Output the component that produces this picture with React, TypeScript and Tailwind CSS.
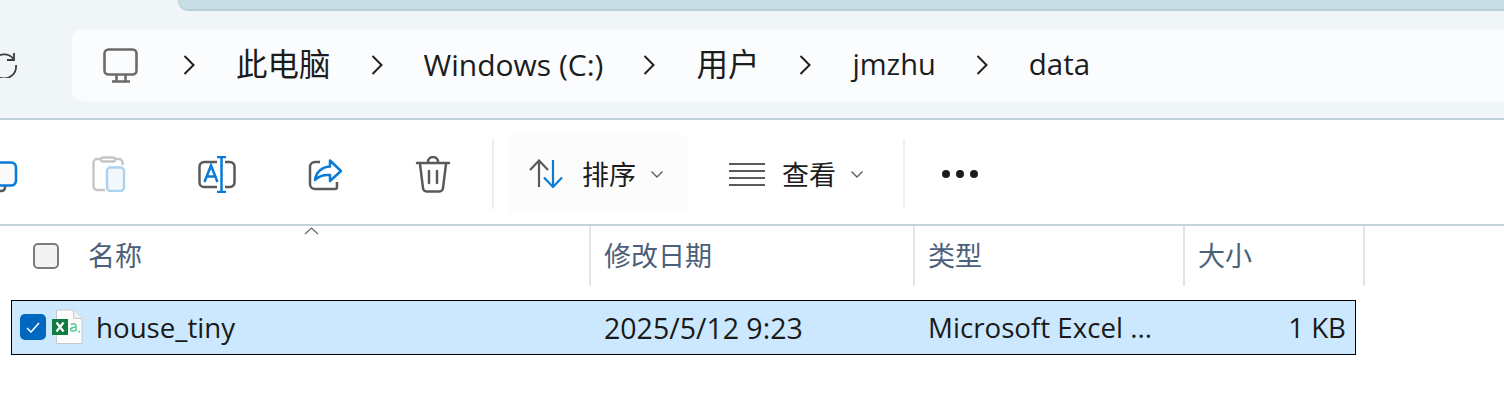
const crumbs = [
  { label: "此电脑", size: "text-[31.500px]" },
  { label: "Windows (C:)", size: "text-[30px]" },
  { label: "用户", size: "text-[31.500px]" },
  { label: "jmzhu", size: "text-[29px]" },
  { label: "data", size: "text-[29.500px]" },
];
const font = "font-['Open_Sans','Noto_Sans_CJK_SC',sans-serif]";

function Chevron() {
  return (
    <svg className="shrink-0" width="12" height="20" viewBox="0 0 12 20" fill="none" stroke="#1f1f1f" strokeWidth="2">
      <path d="M1.500 1 10.500 10 1.500 19" />
    </svg>
  );
}

function SmallDown() {
  return (
    <svg width="14" height="9" viewBox="0 0 14 9" fill="none" stroke="#5d5d5d" strokeWidth="1.400">
      <path d="M1.500 1.500 7 7l5.500-5.500" />
    </svg>
  );
}

function CopyIcon() {
  return (
    <svg width="40" height="32" viewBox="0 0 40 32" fill="none" strokeWidth="2.600">
      <path d="M24 25v1.500a3.500 3.500 0 0 1-3.500 3.500H18" stroke="#5a5a5a" />
      <rect x="1" y="1.500" width="34" height="23" rx="5" fill="#fafafa" stroke="#0a7ad6" />
    </svg>
  );
}

function PasteIcon() {
  return (
    <svg width="34" height="36" viewBox="0 0 34 36" fill="none" strokeWidth="2.400">
      <path d="M13 34H5a3.500 3.500 0 0 1-3.500-3.500V6.500A3.500 3.500 0 0 1 5 3h4M23 3h4a3.500 3.500 0 0 1 3.500 3.500V9" stroke="#c6c6c6" />
      <rect x="9" y="1.500" width="14" height="4" rx="2" stroke="#c6c6c6" />
      <rect x="15" y="11.500" width="17" height="23.500" rx="3.500" fill="#f3f8fc" stroke="#a9d2f1" />
    </svg>
  );
}

function RenameIcon() {
  return (
    <svg width="38" height="37" viewBox="0 0 38 37" fill="none" strokeWidth="2.500">
      <path d="M19 6H6a4.500 4.500 0 0 0-4.500 4.500v16A4.500 4.500 0 0 0 6 31h13M27 6h5a4.500 4.500 0 0 1 4.500 4.500v16A4.500 4.500 0 0 1 32 31h-5" stroke="#5a5a5a" />
      <path d="M19 1h9M23.500 1v35M19 36h9" stroke="#0a7ad6" />
      <path d="M6.500 26 13 9.500 19.500 26M9 20.500h8" stroke="#0a7ad6" />
    </svg>
  );
}

function ShareIcon() {
  return (
    <svg width="35" height="33" viewBox="0 0 35 33" fill="none" strokeWidth="2.500">
      <path d="M12 4H7a5 5 0 0 0-5 5v17a5 5 0 0 0 5 5h20a2 2 0 0 0 2-2v-5" stroke="#5a5a5a" />
      <path d="M22 2.500 33 13 22 23v-6c-6-.5-11 .5-15 5 1-8 7-13 15-13.500z" stroke="#0a7ad6" strokeLinejoin="round" />
    </svg>
  );
}

function TrashIcon() {
  return (
    <svg width="36" height="37" viewBox="0 0 36 37" fill="none" stroke="#5a5a5a" strokeWidth="2.500" strokeLinecap="round">
      <path d="M2 7h32M13 6a5 5 0 0 1 10 0M5 8l3 24a3.500 3.500 0 0 0 3.500 3.500h13A3.500 3.500 0 0 0 28 32l3-24M14 15v12M22 15v12" />
    </svg>
  );
}

function SortIcon() {
  return (
    <svg width="38" height="30" viewBox="0 0 38 30" fill="none" strokeWidth="2.200">
      <path d="M10 28V2M1 11 10 1.500 19 11" stroke="#5a5a5a" />
      <path d="M24 1v26M15 18.500 24 28l9-9.500" stroke="#0a7ad6" />
    </svg>
  );
}

function ListIcon() {
  return (
    <svg width="36" height="24" viewBox="0 0 36 24" fill="none" stroke="#5a5a5a" strokeWidth="2">
      <path d="M0 2h36M0 9h36M0 16h36M0 23h36" />
    </svg>
  );
}

function ExcelIcon() {
  return (
    <svg width="32" height="36" viewBox="0 0 32 36" fill="none">
      <path d="M4.500 1h17L30 9.500V34.500H4.500z" fill="#fdfdfd" stroke="#c9c9c9" />
      <path d="M21.500 1v8.500H30" fill="#f0f0f0" stroke="#c9c9c9" />
      <rect x="0" y="10" width="16" height="16" fill="#107c41" />
      <path d="M4.500 13.500 11.500 22.500M11.500 13.500 4.500 22.500" stroke="#fff" strokeWidth="2.200" />
      <path d="M19 15.500c3-1.500 5-.5 5 1.500v5M24 18.500c-3-.5-5.500.5-5.500 2s2.500 2.500 5.500.5" stroke="#4fcf8f" strokeWidth="1.500" />
      <path d="M27.500 21.500 27 24" stroke="#4fcf8f" strokeWidth="1.200" />
    </svg>
  );
}

function CheckBox({ checked }: { checked?: boolean }) {
  if (checked) {
    return (
      <div className="w-[26px] h-[26px] rounded-[5px] bg-[#0067c0] flex items-center justify-center">
        <svg width="14" height="11" viewBox="0 0 14 11" fill="none" stroke="#fff" strokeWidth="1.500">
          <path d="M1 6l4 4 8-9" />
        </svg>
      </div>
    );
  }
  return <div className="w-[26px] h-[26px] rounded-[5px] bg-[#f3f3f3] border-2 border-[#7c7c7c]" />;
}

export default function App() {
  return (
    <div className={`w-[1504px] h-[414px] overflow-hidden bg-white ${font}`}>
      {/* title + address bar */}
      <div className="h-[120px] bg-[#f0f5f7] border-b-2 border-[#c0d2d9] flex flex-col">
        <div className="h-[11px] pl-[178px]">
          <div className="h-full bg-[#c9dde4] border-b-2 border-l border-[#b9d0d9] rounded-bl-[10px]" />
        </div>
        <div className="flex mt-[18px]">
          <div className="w-[72px] h-[72px] overflow-hidden flex items-center justify-end pr-[54px] pb-[3px]">
            <svg className="shrink-0" width="27" height="28" viewBox="0 0 27 28" fill="none" stroke="#3d3d3d" strokeWidth="1.800">
              <path d="M23 3v7h-7" />
              <path d="M22.500 9A12 12 0 1 0 25 15" />
            </svg>
          </div>
          <div className="flex-1 h-[72px] bg-[#fbfcfe] rounded-l-[10px] flex items-center pl-[31px] text-[#1c1c1c]">
            <svg className="mr-[4px]" width="36" height="35" viewBox="0 0 36 35" fill="none" stroke="#6b6b6b" strokeWidth="2.600">
              <rect x="1.500" y="1.500" width="32" height="25" rx="4" />
              <path d="M9 33.500h18M13.500 27v6M22.500 27v6" />
            </svg>
            {crumbs.map((c) => (
              <div key={c.label} className="flex items-center pl-[40px]">
                <Chevron />
                <span className={`ml-[41px] pb-[2px] whitespace-nowrap ${c.size}`}>{c.label}</span>
              </div>
            ))}
          </div>
        </div>
      </div>

      {/* command bar */}
      <div className="h-[106px] border-b-2 border-[#c5d3d9] flex items-center pt-[4px]">
        <div className="ml-[-53px] w-[108px] flex justify-center pt-[6px]"><CopyIcon /></div>
        <div className="w-[108px] flex justify-center"><PasteIcon /></div>
        <div className="w-[108px] flex justify-center"><RenameIcon /></div>
        <div className="w-[108px] flex justify-center"><ShareIcon /></div>
        <div className="w-[108px] flex justify-center"><TrashIcon /></div>
        <div className="ml-[5px] w-[2px] h-[70px] bg-[#eeeeee]" />
        <div className="ml-[13px] w-[181px] h-[80px] rounded-[8px] bg-[#fcfcfc] flex items-center pl-[22px] text-[27px] text-[#1c1c1c]">
          <SortIcon />
          <span className="ml-[15px] pt-[2px]">排序</span>
          <span className="ml-[14px]"><SmallDown /></span>
        </div>
        <div className="ml-[41px] flex items-center text-[27px] text-[#1c1c1c]">
          <ListIcon />
          <span className="ml-[17px] pt-[2px]">查看</span>
          <span className="ml-[14px]"><SmallDown /></span>
        </div>
        <div className="ml-[39px] w-[2px] h-[70px] bg-[#eeeeee]" />
        <div className="ml-[37px] flex gap-[6px]">
          <div className="w-[8px] h-[8px] rounded-full bg-[#1c1c1c]" />
          <div className="w-[8px] h-[8px] rounded-full bg-[#1c1c1c]" />
          <div className="w-[8px] h-[8px] rounded-full bg-[#1c1c1c]" />
        </div>
      </div>

      {/* column headers */}
      <div className="relative flex h-[60px] text-[27px] text-[#4c607a]">
        <svg className="absolute left-[304px] top-[1px]" width="15" height="8" viewBox="0 0 15 8" fill="none" stroke="#6a6a6a" strokeWidth="1.200">
          <path d="M1 7l6.500-6L14 7" />
        </svg>
        <div className="w-[591px] border-r-2 border-[#e5e5e5] flex items-center pl-[33px]">
          <CheckBox />
          <span className="ml-[29px]">名称</span>
        </div>
        <div className="w-[324px] border-r-2 border-[#e5e5e5] flex items-center pl-[13px]">修改日期</div>
        <div className="w-[270px] border-r-2 border-[#e5e5e5] flex items-center pl-[13px]">类型</div>
        <div className="w-[180px] border-r-2 border-[#e5e5e5] flex items-center pl-[13px]">大小</div>
      </div>

      {/* selected row */}
      <div className="ml-[11px] mt-[14px] w-[1345px] h-[55px] bg-[#cce8ff] border border-black flex items-center text-[27.700px] text-[#1a1a1a]">
        <div className="w-[579px] flex items-center pl-[8px]">
          <CheckBox checked />
          <div className="ml-[6px]"><ExcelIcon /></div>
          <span className="ml-[12px] pt-[1px]">house_tiny</span>
        </div>
        <div className="w-[324px] pl-[13px] pt-[1px] text-[28.500px]">2025/5/12 9:23</div>
        <div className="w-[270px] pl-[13px] pt-[1px] whitespace-nowrap">Microsoft Excel ...</div>
        <div className="flex-1 text-right pr-[9px] pt-[1px]">1 KB</div>
      </div>
    </div>
  );
}
